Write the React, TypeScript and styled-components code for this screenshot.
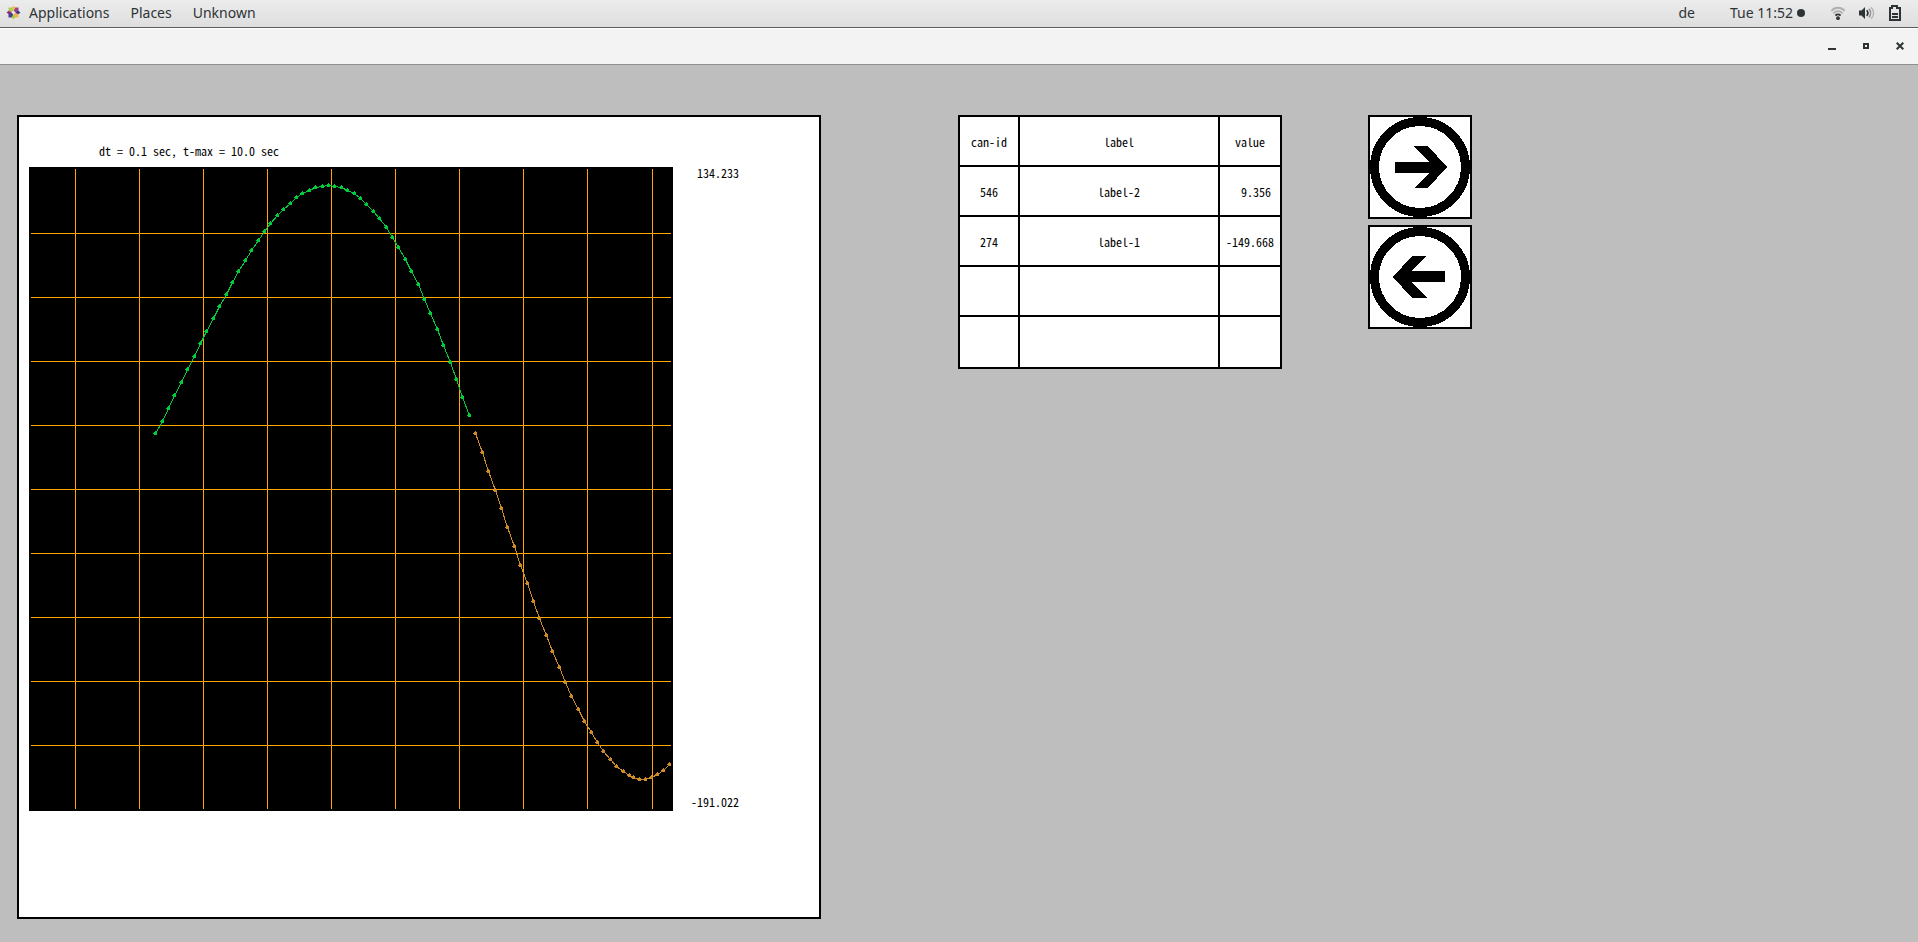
import React from 'react';
import styled, { createGlobalStyle } from 'styled-components';

const GlobalStyle = createGlobalStyle`
  * { box-sizing: border-box; }
  body {
    margin: 0;
    background: #bebebe;
    color: #000;
    font-family: 'Noto Sans', 'Open Sans', sans-serif;
  }
  button { margin: 0; padding: 0; border: 0; background: none; color: inherit; font: inherit; }
  svg { display: block; }
`;

const Screen = styled.div`
  display: flex;
  flex-direction: column;
  min-height: 100vh;
`;

const TopBar = styled.header`
  display: flex;
  align-items: center;
  justify-content: space-between;
  height: 28px;
  padding: 0 17px 2px 6px;
  background: linear-gradient(#ececec, #dedede);
  border-bottom: 1px solid #5c5e5c;
  color: #2e3436;
  font-size: 14px;
  line-height: 20px;
`;

const Group = styled.div<{ $gap: number }>`
  display: flex;
  align-items: center;
  gap: ${(p) => p.$gap}px;
`;

const MenuButton = styled.button<{ $gap?: number }>`
  display: flex;
  align-items: center;
  gap: ${(p) => p.$gap ?? 8}px;
`;

const TitleBar = styled.div`
  display: flex;
  align-items: center;
  justify-content: flex-end;
  gap: 18px;
  height: 37px;
  padding: 0 10px 1px;
  background: #f3f3f3;
  border-top: 1px solid #fff;
  border-bottom: 1px solid #8f908b;
  color: #2e3436;
`;

const WindowButton = styled.button`
  display: grid;
  place-items: center;
  width: 16px;
  height: 16px;
`;

const Workspace = styled.main`
  display: flex;
  align-items: flex-start;
  padding: 50px 17px 23px;
  font-family: 'Noto Sans Mono CJK JP', 'Noto Sans CJK JP', 'Liberation Mono', monospace;
  font-feature-settings: 'hwid';
  font-size: 12px;
  line-height: 13px;
`;

const PlotPanel = styled.section`
  flex: none;
  padding: 27px 80px 106px 10px;
  background: #fff;
  border: 2px solid #000;
`;

const PlotTitle = styled.h1`
  margin: 0 0 10px 70px;
  font: inherit;
`;

const PlotRow = styled.div`
  display: flex;
`;

const RangeLabels = styled.div`
  display: flex;
  flex-direction: column;
  justify-content: space-between;
  width: 66px;
  padding-bottom: 4px;
  line-height: 11px;
  text-align: right;
`;

const SignalTable = styled.table`
  flex: none;
  width: 324px;
  margin-left: 137px;
  table-layout: fixed;
  border-collapse: collapse;
  background: #fff;
`;

const Column = styled.col<{ $width?: number }>`
  width: ${(p) => (p.$width ? `${p.$width}px` : 'auto')};
`;

const Row = styled.tr<{ $height?: number }>`
  height: ${(p) => p.$height ?? 50}px;
`;

const cell = `
  padding: 0;
  border: 2px solid #000;
  font-weight: 400;
  text-align: center;
  white-space: pre;
`;
const Head = styled.th`${cell}`;
const Cell = styled.td`${cell}`;

const Pager = styled.nav`
  display: flex;
  flex-direction: column;
  gap: 6px;
  margin-left: 86px;
`;

const PagerButton = styled.button`
  width: 104px;
  height: 104px;
  background: #fff;
  border: 2px solid #000;
`;

type Point = [number, number];

const GREEN_Y = [
  266, 254, 241, 228, 215, 202, 189, 176, 164, 151, 139, 127, 115, 104, 93, 83, 73, 64, 56, 48,
  42, 36, 30, 26, 23, 20, 19, 18, 19, 20, 23, 26, 31, 37, 44, 51, 60, 70, 80, 92,
  104, 117, 132, 146, 162, 178, 195, 212, 230, 248,
];
const GREEN: Point[] = GREEN_Y.map((y, i) => [Math.floor(126.7 + 6.4 * i), y]);

const ORANGE: Point[] = [
  [446, 266], [453, 285], [459, 304], [466, 323], [472, 341], [478, 360], [485, 379], [491, 398],
  [498, 416], [504, 434], [510, 451], [517, 468], [523, 484], [530, 500], [536, 515], [542, 529],
  [549, 542], [555, 554], [562, 565], [568, 575], [574, 584], [581, 592], [587, 599], [594, 604],
  [600, 608], [604, 610], [610, 612], [616, 612], [622, 610], [628, 607], [634, 603], [640, 597],
];

const GRID_X = [46, 110, 174, 238, 302, 366, 430, 494, 558, 623];
const GRID_Y = [66, 130, 194, 258, 322, 386, 450, 514, 578];

function Trace({ points, color }: { points: Point[]; color: string }) {
  return (
    <g fill={color}>
      <polyline
        points={points.map(([x, y]) => `${x + 0.5},${y + 0.5}`).join(' ')}
        fill="none"
        stroke={color}
      />
      {points.map(([x, y]) => (
        <path key={x} d={`M${x} ${y - 2}h1v1h1v3h-3v-1h-1v-1h1v-1h1z`} />
      ))}
    </g>
  );
}

function Plot() {
  return (
    <svg width="644" height="644" shapeRendering="crispEdges" role="img" aria-label="Signal plot">
      <rect width="644" height="644" />
      <g fill="#ffa500">
        {GRID_X.map((x) => <rect key={x} x={x} y="2" width="1" height="640" />)}
        {GRID_Y.map((y) => <rect key={y} x="2" y={y} width="640" height="1" />)}
      </g>
      <Trace points={GREEN} color="#00cd3c" />
      <Trace points={ORANGE} color="#cd8c28" />
    </svg>
  );
}

function DistroLogo() {
  return (
    <svg width="15" height="15" viewBox="0 0 15 15" aria-hidden="true">
      <path d="M2.500 2.500h4.500v4.500h-4.500z" fill="#a9d054" />
      <path d="M8 2.500h4.500v4.500H8z" fill="#a0418f" />
      <path d="M2.500 8h4.500v4.500h-4.500z" fill="#45438c" />
      <path d="M8 8h4.500v4.500H8z" fill="#f3b450" />
      <path d="M7.500 0.500l1.800 2.200L7.500 6L5.700 2.700z" fill="#efc050" />
      <path d="M14.500 7.500l-2.200 1.800L9 7.500l3.300-1.800z" fill="#3c3a86" />
      <path d="M7.500 14.500l-1.800-2.200L7.500 9l1.800 3.300z" fill="#a6cc4a" />
      <path d="M0.500 7.500l2.200-1.800L6 7.500L2.700 9.300z" fill="#942c84" />
      <circle cx="7.500" cy="7.500" r="1.600" fill="#efe6ea" />
    </svg>
  );
}

function Wifi() {
  return (
    <svg width="16" height="16" viewBox="0 0 16 16" fill="none" aria-label="Wireless" role="img">
      <path d="M1.300 5.800C5 1.700 11 1.700 14.700 5.800" stroke="#aeb0b0" strokeWidth="1.800" />
      <path d="M3.400 8.300c2.600-2.800 6.600-2.800 9.200 0" stroke="#aeb0b0" strokeWidth="1.800" />
      <path d="M5.400 10.600c1.500-1.500 3.700-1.500 5.200 0" stroke="#2e3436" strokeWidth="1.800" />
      <circle cx="8" cy="13.200" r="1.900" fill="#2e3436" />
    </svg>
  );
}

function Volume() {
  return (
    <svg width="16" height="16" viewBox="0 0 16 16" fill="none" aria-label="Volume" role="img">
      <path d="M0 5.500h2.500L6 2v12l-3.500-3.500H0z" fill="#2e3436" />
      <path d="M7.700 5.200c1.400 1.600 1.400 4 0 5.600" stroke="#2e3436" strokeWidth="1.700" />
      <path d="M9.900 3.700c2.200 2.500 2.200 6.100 0 8.600" stroke="#909393" strokeWidth="1.600" />
      <path d="M12.100 2.200c3.200 3.500 3.200 8.100 0 11.600" stroke="#b4b6b6" strokeWidth="1.600" />
    </svg>
  );
}

function Battery() {
  return (
    <svg width="13" height="17" viewBox="0 0 13 17" aria-label="Battery" role="img" fill="#2e3436">
      <path fillRule="evenodd" d="M3 1h7v2h3v14H1V3h2zM5 3v2H3v10h8V5H8V3z" />
      <path d="M4 9h6v2H4zM4 12h6v2H4z" />
    </svg>
  );
}

function RoundArrow({ points }: { points: string }) {
  return (
    <svg width="100" height="100" viewBox="2 2 100 100" shapeRendering="crispEdges" aria-hidden="true">
      <circle cx="52" cy="52" r="45.500" fill="none" stroke="#000" strokeWidth="9" />
      <polygon points={points} />
    </svg>
  );
}

const ROWS = [
  ['546', 'label-2', '  9.356'],
  ['274', 'label-1', '-149.668'],
  ['', '', ''],
  ['', '', ''],
];

export default function App() {
  return (
    <Screen>
      <GlobalStyle />
      <TopBar>
        <Group $gap={21}>
          <MenuButton><DistroLogo />Applications</MenuButton>
          <MenuButton>Places</MenuButton>
          <MenuButton>Unknown</MenuButton>
        </Group>
        <Group $gap={35}>
          <MenuButton>de</MenuButton>
          <Group $gap={25}>
            <MenuButton $gap={4}>
              Tue 11:52
              <svg width="8" height="8" aria-hidden="true"><circle cx="4" cy="4" r="4" fill="#2e3436" /></svg>
            </MenuButton>
            <Group $gap={13}><Wifi /><Volume /><Battery /></Group>
          </Group>
        </Group>
      </TopBar>
      <TitleBar>
        <WindowButton aria-label="Minimize">
          <svg width="8" height="8"><path d="M0 6h8v2H0z" fill="#2e3436" /></svg>
        </WindowButton>
        <WindowButton aria-label="Maximize">
          <svg width="6" height="6"><path d="M1 1h4v4H1z" fill="none" stroke="#2e3436" strokeWidth="2" /></svg>
        </WindowButton>
        <WindowButton aria-label="Close">
          <svg width="8" height="8"><path d="M0.700 0.700l6.600 6.600M7.300 0.700L0.700 7.300" stroke="#2e3436" strokeWidth="2" /></svg>
        </WindowButton>
      </TitleBar>
      <Workspace>
        <PlotPanel>
          <PlotTitle>dt = 0.1 sec, t-max = 10.0 sec</PlotTitle>
          <PlotRow>
            <Plot />
            <RangeLabels>
              <span>134.233</span>
              <span>-191.022</span>
            </RangeLabels>
          </PlotRow>
        </PlotPanel>
        <SignalTable>
          <colgroup>
            <Column $width={60} />
            <Column />
            <Column $width={62} />
          </colgroup>
          <thead>
            <Row>
              <Head scope="col">can-id</Head>
              <Head scope="col">label</Head>
              <Head scope="col">value</Head>
            </Row>
          </thead>
          <tbody>
            {ROWS.map((row, i) => (
              <Row key={i} $height={i === ROWS.length - 1 ? 52 : 50}>
                {row.map((text, j) => <Cell key={j}>{text}</Cell>)}
              </Row>
            ))}
          </tbody>
        </SignalTable>
        <Pager aria-label="Pages">
          <PagerButton aria-label="Next">
            <RoundArrow points="27,47 61,47 45,31 60,31 79,52 60,73 46,73 61,58 27,58" />
          </PagerButton>
          <PagerButton aria-label="Previous">
            <RoundArrow points="77,46 43,46 58,31 44,31 25,52 44,73 59,73 43,57 77,57" />
          </PagerButton>
        </Pager>
      </Workspace>
    </Screen>
  );
}
